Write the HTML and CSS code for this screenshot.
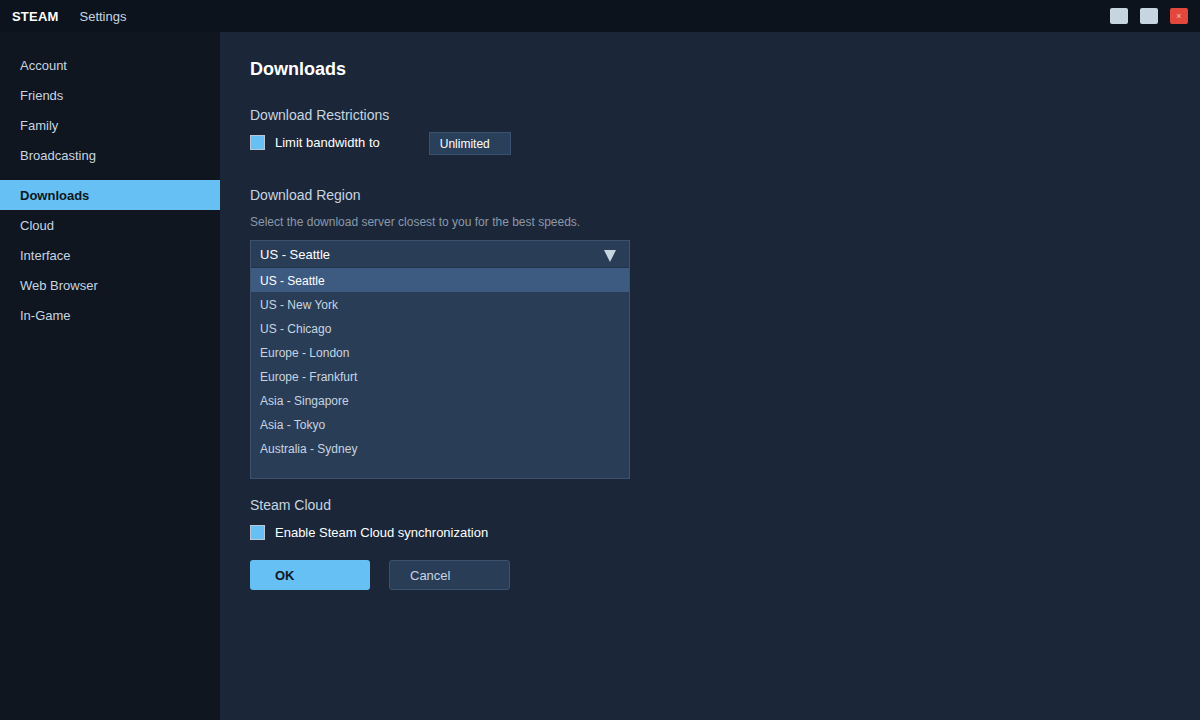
FILE: index.html
```html
<!DOCTYPE html>
<html lang="en">
<head>
    <meta charset="UTF-8">
    <title>Steam Settings</title>
    <link rel="stylesheet" href="styles.css">
</head>
<body>
    <div class="titlebar">
        <div class="brand">STEAM</div>
        <div class="window-title">Settings</div>
        <div class="window-controls">
            <div class="win-btn"></div>
            <div class="win-btn"></div>
            <div class="win-btn close">×</div>
        </div>
    </div>

    <div class="app">
        <div class="sidebar">
            <div class="nav-item">Account</div>
            <div class="nav-item">Friends</div>
            <div class="nav-item">Family</div>
            <div class="nav-item">Broadcasting</div>
            <div class="nav-item active">Downloads</div>
            <div class="nav-item">Cloud</div>
            <div class="nav-item">Interface</div>
            <div class="nav-item">Web Browser</div>
            <div class="nav-item">In-Game</div>
        </div>

        <div class="content">
            <h1 class="page-title">Downloads</h1>

            <div class="section">
                <div class="section-title">Download Restrictions</div>
                <div class="check-row">
                    <div class="checkbox"></div>
                    <span class="check-label">Limit bandwidth to</span>
                    <div class="small-select">Unlimited</div>
                </div>
            </div>

            <div class="section region">
                <div class="section-title">Download Region</div>
                <div class="section-desc">Select the download server closest to you for the best speeds.</div>
                <div class="dropdown">
                    <div class="dropdown-head">
                        <span>US - Seattle</span>
                        <span class="arrow"></span>
                    </div>
                    <div class="dropdown-list">
                        <div class="option selected">US - Seattle</div>
                        <div class="option">US - New York</div>
                        <div class="option">US - Chicago</div>
                        <div class="option">Europe - London</div>
                        <div class="option">Europe - Frankfurt</div>
                        <div class="option">Asia - Singapore</div>
                        <div class="option">Asia - Tokyo</div>
                        <div class="option">Australia - Sydney</div>
                    </div>
                </div>
            </div>

            <div class="section cloud">
                <div class="section-title">Steam Cloud</div>
                <div class="check-row">
                    <div class="checkbox"></div>
                    <span class="check-label">Enable Steam Cloud synchronization</span>
                </div>
            </div>

            <div class="buttons">
                <button class="btn btn-ok">OK</button>
                <button class="btn btn-cancel">Cancel</button>
            </div>
        </div>
    </div>
</body>
</html>
```

FILE: styles.css
```css
* {
    margin: 0;
    padding: 0;
    box-sizing: border-box;
}

body {
    font-family: 'Liberation Sans', Arial, sans-serif;
    background: #1b2738;
    width: 1200px;
    height: 720px;
    overflow: hidden;
    color: #c7d5e0;
}

.titlebar {
    height: 32px;
    background: #0d131c;
    display: flex;
    align-items: center;
    padding: 0 12px;
}

.brand {
    font-size: 13px;
    font-weight: bold;
    color: #ffffff;
    letter-spacing: 0.2px;
}

.window-title {
    font-size: 13px;
    color: #c7d5e0;
    margin-left: 21px;
}

.window-controls {
    margin-left: auto;
    display: flex;
    gap: 12px;
}

.win-btn {
    width: 18px;
    height: 16px;
    background: #c7d5e0;
    border-radius: 2px;
    font-size: 9px;
    color: #ffffff;
    display: flex;
    align-items: center;
    justify-content: center;
}

.win-btn.close {
    background: #e2483b;
    color: #f3c4bf;
}

.app {
    display: flex;
    height: 688px;
}

.sidebar {
    width: 220px;
    background: #0f1620;
    padding-top: 18px;
}

.nav-item {
    height: 30px;
    line-height: 31px;
    padding-left: 20px;
    font-size: 13px;
    color: #c7d5e0;
}

.nav-item.active {
    background: #66c0f4;
    color: #0f1620;
    font-weight: bold;
    margin-top: 10px;
}

.content {
    flex: 1;
    padding: 27px 30px;
}

.page-title {
    font-size: 18px;
    line-height: 21px;
    font-weight: bold;
    color: #ffffff;
    margin-bottom: 27px;
}

.section-title {
    font-size: 14px;
    line-height: 16px;
    color: #c7d5e0;
    margin-bottom: 7px;
}

.region {
    margin-top: 33px;
}

.region .section-title {
    margin-bottom: 12px;
}

.section-desc {
    font-size: 12px;
    line-height: 14px;
    color: #8b98a9;
    margin-bottom: 11px;
}

.cloud {
    margin-top: 18px;
}

.check-row {
    display: flex;
    align-items: center;
    height: 24px;
}

.checkbox {
    width: 15px;
    height: 15px;
    background: #66c0f4;
    border: 1px solid #b8c8d6;
}

.check-label {
    font-size: 13px;
    color: #ffffff;
    margin-left: 10px;
}

.small-select {
    margin-left: 49px;
    margin-top: 3px;
    width: 82px;
    height: 23px;
    line-height: 22px;
    background: #2a3f5a;
    border: 1px solid #3a5070;
    font-size: 12px;
    color: #ffffff;
    padding-left: 10px;
}

.dropdown {
    width: 380px;
    border: 1px solid #3b526f;
    background: #2a3d57;
}

.dropdown-head {
    height: 27px;
    display: flex;
    align-items: center;
    justify-content: space-between;
    padding: 0 13px 0 9px;
    font-size: 13px;
    color: #ffffff;
    border-bottom: 1px solid #22324a;
}

.arrow {
    width: 0;
    height: 0;
    border-left: 6px solid transparent;
    border-right: 6px solid transparent;
    border-top: 12px solid #c7d5e0;
    margin-top: 3px;
}

.dropdown-list {
    padding-bottom: 18px;
}

.option {
    height: 24px;
    line-height: 26px;
    padding-left: 9px;
    font-size: 12px;
    color: #c7d5e0;
}

.option.selected {
    background: #3d5a80;
    color: #ffffff;
}

.buttons {
    display: flex;
    gap: 19px;
    margin-top: 16px;
}

.btn {
    width: 120px;
    height: 30px;
    border-radius: 3px;
    font-family: 'Liberation Sans', Arial, sans-serif;
    font-size: 13px;
    text-align: left;
    padding-left: 25px;
    border: none;
}

.btn-ok {
    background: #66c0f4;
    color: #0f1620;
    font-weight: bold;
}

.btn-cancel {
    width: 121px;
    background: #2a3d57;
    border: 1px solid #3b526f;
    color: #c7d5e0;
    padding-left: 20px;
}
```
